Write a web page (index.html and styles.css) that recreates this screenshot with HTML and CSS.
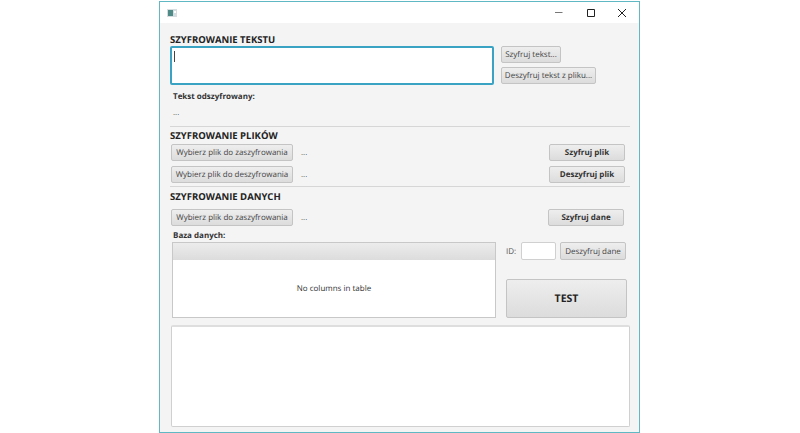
FILE: index.html
```html
<!DOCTYPE html>
<html lang="pl">
<head>
  <meta charset="UTF-8">
  <meta name="viewport" content="width=device-width, initial-scale=1.0">
  <title>Szyfrowanie</title>
  <link rel="stylesheet" href="styles.css">
</head>
<body>
  <div class="window">
    <div class="titlebar">
      <svg class="app-icon" width="10" height="8" viewBox="0 0 10 8">
        <rect width="10" height="8" fill="#d5dde0"/>
        <rect x="1" y="1" width="5" height="6" fill="#4f8a86"/>
        <rect x="7" y="2" width="2" height="2" fill="#fff"/>
      </svg>
      <div class="controls">
        <svg width="10" height="10" viewBox="0 0 10 10"><path d="M0 4.5H7.5" stroke="#777" fill="none"/></svg>
        <svg width="10" height="10" viewBox="0 0 10 10"><path d="M1.5 1.5H8.5V8.5H1.5Z" stroke="#222" fill="none"/></svg>
        <svg width="10" height="10" viewBox="0 0 10 10"><path d="M1 1L9 9M9 1L1 9" stroke="#222" fill="none"/></svg>
      </div>
    </div>
    <div class="content">
      <h2 class="heading">SZYFROWANIE TEKSTU</h2>
      <div class="text-row">
        <div class="text-input"><span class="caret"></span></div>
        <div class="text-actions">
          <button class="btn">Szyfruj tekst...</button>
          <button class="btn">Deszyfruj tekst z pliku...</button>
        </div>
      </div>
      <p class="label decoded-label">Tekst odszyfrowany:</p>
      <p class="dots decoded-value">...</p>
      <hr class="line first-line">

      <h2 class="heading">SZYFROWANIE PLIKÓW</h2>
      <div class="file-row row-a">
        <button class="btn file-btn">Wybierz plik do zaszyfrowania</button>
        <span class="dots">...</span>
        <button class="btn action-btn">Szyfruj plik</button>
      </div>
      <div class="file-row row-b">
        <button class="btn file-btn">Wybierz plik do deszyfrowania</button>
        <span class="dots">...</span>
        <button class="btn action-btn">Deszyfruj plik</button>
      </div>
      <hr class="line second-line">

      <h2 class="heading">SZYFROWANIE DANYCH</h2>
      <div class="file-row row-c">
        <button class="btn file-btn">Wybierz plik do zaszyfrowania</button>
        <span class="dots">...</span>
        <button class="btn action-btn">Szyfruj dane</button>
      </div>
      <p class="label db-label">Baza danych:</p>
      <div class="db-row">
        <div class="table">
          <div class="table-head"></div>
          <div class="table-body">No columns in table</div>
        </div>
        <div class="db-side">
          <div class="id-row">
            <span class="id-label">ID:</span>
            <div class="id-input"></div>
            <button class="btn id-btn">Deszyfruj dane</button>
          </div>
          <button class="btn test-btn">TEST</button>
        </div>
      </div>
      <div class="log"></div>
    </div>
  </div>
</body>
</html>
```

FILE: styles.css
```css
* {
  box-sizing: border-box;
}
html, body {
  height: 100%;
}
body {
  margin: 0;
  padding-top: 1px;
  background: #fff;
  font-family: "Open Sans", "Noto Sans", sans-serif;
  text-rendering: geometricPrecision;
  color: #333;
  overflow: hidden;
}
p, h2, hr {
  margin: 0;
}
.window {
  width: 481px;
  height: 432px;
  margin-left: 159px;
  border: 1px solid #5fb8c4;
  background: #f4f4f4;
  display: flex;
  flex-direction: column;
}
.titlebar {
  height: 21px;
  background: #fff;
  display: flex;
  align-items: center;
  justify-content: space-between;
  padding: 0 12px 0 7px;
}
.controls {
  display: flex;
  gap: 21px;
}
.content {
  flex: 1;
  padding: 11px 9px 4px 10px;
  display: flex;
  flex-direction: column;
}
.heading {
  font-size: 9.5px;
  line-height: 12px;
  font-weight: 700;
  color: #222;
}
.text-row {
  display: flex;
  gap: 7px;
}
.text-input {
  width: 324px;
  height: 39px;
  background: #fff;
  border: 2px solid #3aa3c4;
  border-radius: 2px;
  padding: 3px 2px;
}
.caret {
  display: block;
  width: 1px;
  height: 11px;
  background: #444;
}
.text-actions {
  display: flex;
  flex-direction: column;
  align-items: flex-start;
  gap: 4px;
}
.btn {
  font-family: inherit;
  text-rendering: inherit;
  font-size: 8px;
  color: #444;
  height: 17px;
  padding: 0;
  border: 1px solid #c4c4c4;
  border-radius: 2px;
  background: linear-gradient(#eee, #dcdcdc);
  white-space: nowrap;
}
.text-actions .btn:first-child {
  width: 60px;
}
.text-actions .btn:last-child {
  width: 95px;
}
.label {
  font-size: 8px;
  line-height: 10px;
  font-weight: 700;
  color: #333;
}
.decoded-label {
  margin: 7px 0 0 3px;
}
.dots {
  font-size: 8px;
  line-height: 10px;
  color: #555;
}
.decoded-value {
  margin: 6px 0 0 3px;
}
.line {
  border: 0;
  border-top: 1px solid #d6d6d6;
}
.first-line {
  margin-top: 8px;
  margin-bottom: 3px;
}
.second-line {
  margin-top: 3px;
  margin-bottom: 4px;
}
.file-row {
  display: flex;
  align-items: center;
  padding-left: 1px;
}
.row-a {
  margin-top: 2px;
}
.row-b {
  margin-top: 5px;
}
.row-c {
  margin-top: 6px;
}
.file-btn {
  width: 122px;
}
.file-row .dots {
  margin-left: 8px;
}
.action-btn {
  width: 76px;
  margin-left: auto;
  margin-right: 5px;
  font-weight: 700;
  color: #333;
}
.row-c .action-btn {
  margin-right: 6px;
}
.db-label {
  margin: 5px 0 0 3px;
}
.db-row {
  display: flex;
  margin: 1px 0 0 2px;
  gap: 10px;
}
.table {
  width: 324px;
  height: 76px;
  border: 1px solid #c8c8c8;
  background: #fff;
  display: flex;
  flex-direction: column;
}
.table-head {
  height: 17px;
  background: linear-gradient(#ececec, #dcdcdc);
}
.table-body {
  flex: 1;
  display: flex;
  align-items: center;
  justify-content: center;
  font-size: 8px;
  color: #333;
}
.db-side {
  width: 122px;
  display: flex;
  flex-direction: column;
}
.id-row {
  height: 18px;
  display: flex;
  align-items: center;
}
.id-label {
  font-size: 8px;
  color: #555;
  width: 15px;
}
.id-input {
  width: 35px;
  height: 18px;
  background: #fff;
  border: 1px solid #d0d0d0;
  border-radius: 2px;
}
.id-btn {
  width: 66px;
  height: 18px;
  margin-left: 4px;
}
.test-btn {
  width: 121px;
  height: 39px;
  margin-top: 19px;
  font-size: 10.5px;
  font-weight: 700;
  color: #222;
}
.log {
  height: 102px;
  margin: 7px 0 0 1px;
  background: #fff;
  border: 1px solid #d0d0d0;
  border-top: 2px solid #dedede;
  border-radius: 2px;
}
```
